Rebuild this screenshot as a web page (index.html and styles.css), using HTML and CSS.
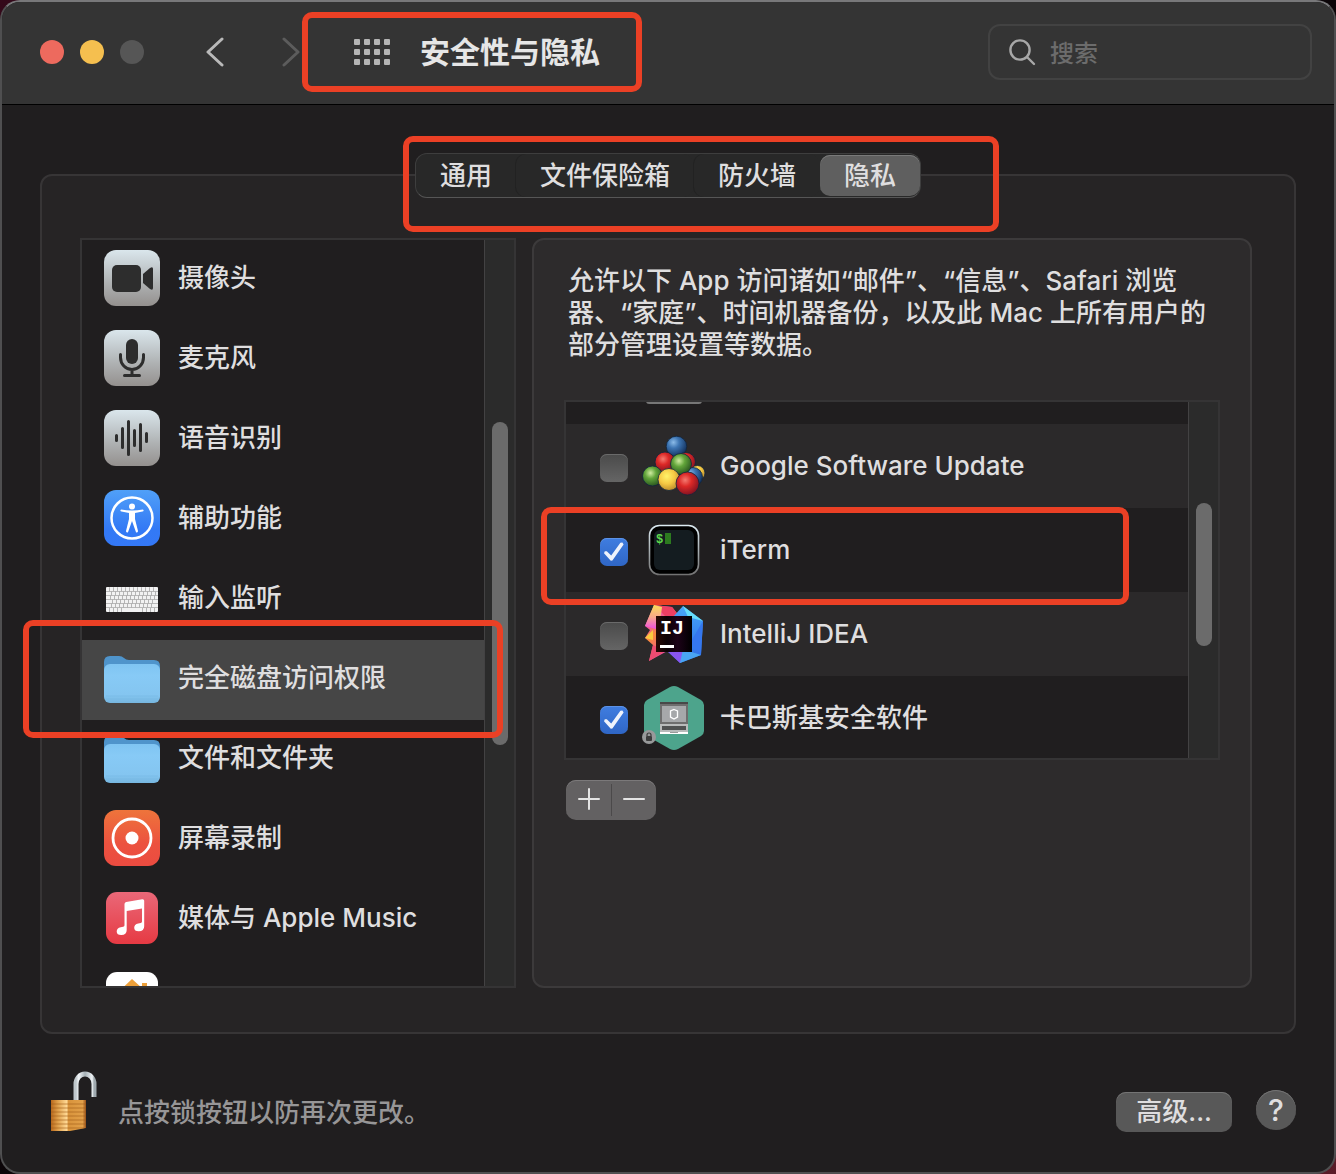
FILE: index.html
```html
<!DOCTYPE html>
<html lang="zh-CN">
<head>
    <meta charset="UTF-8">
    <meta name="viewport" content="width=device-width, initial-scale=1.0">
    <title>安全性与隐私</title>
    <link rel="stylesheet" href="styles.css">
</head>
<body>
    <div class="window">
        <header class="toolbar">
            <div class="lights">
                <button class="light red" aria-label="关闭"></button>
                <button class="light yellow" aria-label="最小化"></button>
                <button class="light" aria-label="缩放" disabled></button>
            </div>
            <nav class="nav">
                <button class="nav-button" aria-label="返回">
                    <svg width="20" height="30" viewBox="0 0 20 30" fill="none" stroke="#b9b9b9" stroke-width="3" stroke-linecap="round" stroke-linejoin="round"><path d="M17 2 3 15l14 13"/></svg>
                </button>
                <button class="nav-button" aria-label="前进" disabled>
                    <svg width="20" height="30" viewBox="0 0 20 30" fill="none" stroke="#5c5c5c" stroke-width="3" stroke-linecap="round" stroke-linejoin="round"><path d="M3 2l14 13L3 28"/></svg>
                </button>
            </nav>
            <div class="title-box">
                <button class="nav-button" aria-label="全部显示">
                    <svg width="36" height="26" viewBox="0 0 36 26" fill="#b5b5b5">
                        <rect x="0" y="0" width="6" height="6" rx="1"/><rect x="10" y="0" width="6" height="6" rx="1"/><rect x="20" y="0" width="6" height="6" rx="1"/><rect x="30" y="0" width="6" height="6" rx="1"/>
                        <rect x="0" y="10" width="6" height="6" rx="1"/><rect x="10" y="10" width="6" height="6" rx="1"/><rect x="20" y="10" width="6" height="6" rx="1"/><rect x="30" y="10" width="6" height="6" rx="1"/>
                        <rect x="0" y="20" width="6" height="6" rx="1"/><rect x="10" y="20" width="6" height="6" rx="1"/><rect x="20" y="20" width="6" height="6" rx="1"/><rect x="30" y="20" width="6" height="6" rx="1"/>
                    </svg>
                </button>
                <h1>安全性与隐私</h1>
            </div>
            <label class="search">
                <svg width="28" height="28" viewBox="0 0 28 28" fill="none" stroke="#a8a8a8" stroke-width="2.4" stroke-linecap="round"><circle cx="12" cy="12" r="9.6"/><path d="M19 19l7 7"/></svg>
                <input type="search" placeholder="搜索" aria-label="搜索">
            </label>
        </header>

        <main class="panel">
            <div class="tabs" role="tablist">
                <button class="tab" role="tab">通用</button>
                <button class="tab" role="tab">文件保险箱</button>
                <button class="tab" role="tab">防火墙</button>
                <button class="tab active" role="tab" aria-selected="true">隐私</button>
                <div class="mark mark-tabs"></div>
            </div>

            <div class="columns">
                <div class="scroll-box sidebar">
                    <ul class="categories">
                        <li><button class="category">
                            <svg class="icon" viewBox="0 0 56 56">
                                <defs><linearGradient id="silver" x1="0" y1="0" x2="0" y2="1"><stop offset="0" stop-color="#dae6ec"/><stop offset=".6" stop-color="#aeb1b2"/><stop offset="1" stop-color="#94908e"/></linearGradient></defs>
                                <rect width="56" height="56" rx="12" fill="url(#silver)"/>
                                <rect x="8" y="15" width="29" height="27" rx="5" fill="#2d2d2d"/>
                                <path d="M39 24l7-6q3-2 3 1v19q0 3-3 1l-7-6z" fill="#2d2d2d"/>
                            </svg>
                            摄像头</button></li>
                        <li><button class="category">
                            <svg class="icon" viewBox="0 0 56 56">
                                <rect width="56" height="56" rx="12" fill="url(#silver)"/>
                                <rect x="22" y="9" width="12" height="25" rx="6" fill="#2d2d2d"/>
                                <path d="M16.500 24.500v3a11.500 12 0 0 0 23 0v-3M28 40v5M20.500 45.500h15" fill="none" stroke="#2d2d2d" stroke-width="3" stroke-linecap="round"/>
                            </svg>
                            麦克风</button></li>
                        <li><button class="category">
                            <svg class="icon" viewBox="0 0 56 56">
                                <rect width="56" height="56" rx="12" fill="url(#silver)"/>
                                <path d="M12.500 25.500v5M18.500 18.500v19M24.500 11.500v33M30.500 20.500v15M36.500 14.500v26M42.500 23.500v8" stroke="#2d2d2d" stroke-width="3" stroke-linecap="round"/>
                            </svg>
                            语音识别</button></li>
                        <li><button class="category">
                            <svg class="icon" viewBox="0 0 56 56">
                                <defs><linearGradient id="blue" x1="0" y1="0" x2="0" y2="1"><stop offset="0" stop-color="#50a0f8"/><stop offset=".7" stop-color="#3379f5"/><stop offset="1" stop-color="#3478f6"/></linearGradient></defs>
                                <rect width="56" height="56" rx="12" fill="url(#blue)"/>
                                <circle cx="28" cy="28" r="20.500" fill="none" stroke="#fff" stroke-width="2.500"/>
                                <circle cx="28" cy="16.500" r="3" fill="#fff"/>
                                <path d="M17 19.500q-1.500 1.500.5 2l7.500 1.500v6l-3 12q0 2 2 1.200l4-11.200 4 11.200q2 .8 2-1.200l-3-12v-6l7.500-1.500q2-.5.5-2-11 2-22 0z" fill="#fff"/>
                            </svg>
                            辅助功能</button></li>
                        <li><button class="category">
                            <svg class="icon" viewBox="0 0 56 56">
                                <rect x="2" y="17" width="52" height="25" rx="1" fill="#f2f2f2"/>
                                <path d="M2 21.500h52M2 25.500h52M2 29.500h52M2 33.500h52M2 37.500h52" stroke="#aaa" stroke-width=".8"/>
                                <path d="M5 19.300h48M6 27.500h46M7 35.500h44" stroke="#a5a5a5" stroke-width="4" stroke-dasharray=".8 3.200"/>
                                <path d="M7 23.500h46M8 31.500h44M5 40h14M38 40h15" stroke="#a5a5a5" stroke-width="4" stroke-dasharray=".8 3.200"/>
                            </svg>
                            输入监听</button></li>
                        <li><button class="category selected">
                            <svg class="icon" viewBox="0 0 56 56">
                                <defs><linearGradient id="folder" x1="0" y1="0" x2="0" y2="1"><stop offset="0" stop-color="#7fc4f2"/><stop offset=".3" stop-color="#87caf6"/><stop offset=".8" stop-color="#84c5f0"/><stop offset="1" stop-color="#76b6df"/></linearGradient></defs>
                                <path d="M0 12q0-6 6-6h9q3 0 5 2 2 2 5 2h25q6 0 6 6v10H0z" fill="#4f94cb"/>
                                <rect y="14" width="56" height="39" rx="6" fill="url(#folder)"/>
                                <path d="M2 46h52M2 49h52" stroke="#76b9e4" stroke-width=".6"/>
                            </svg>
                            完全磁盘访问权限</button></li>
                        <li><button class="category">
                            <svg class="icon" viewBox="0 0 56 56">
                                <path d="M0 12q0-6 6-6h9q3 0 5 2 2 2 5 2h25q6 0 6 6v10H0z" fill="#4f94cb"/>
                                <rect y="14" width="56" height="39" rx="6" fill="url(#folder)"/>
                                <path d="M2 46h52M2 49h52" stroke="#76b9e4" stroke-width=".6"/>
                            </svg>
                            文件和文件夹</button></li>
                        <li><button class="category">
                            <svg class="icon" viewBox="0 0 56 56">
                                <defs><linearGradient id="orange" x1="0" y1="0" x2="0" y2="1"><stop offset="0" stop-color="#ee743b"/><stop offset=".6" stop-color="#ec523f"/><stop offset="1" stop-color="#eb4b40"/></linearGradient></defs>
                                <rect width="56" height="56" rx="12" fill="url(#orange)"/>
                                <circle cx="28" cy="28" r="19" fill="none" stroke="#fff" stroke-width="2.800"/>
                                <circle cx="28" cy="28" r="6.500" fill="#fff"/>
                            </svg>
                            屏幕录制</button></li>
                        <li><button class="category">
                            <svg class="icon" viewBox="0 0 56 56">
                                <defs><linearGradient id="pink" x1="0" y1="0" x2="0" y2="1"><stop offset="0" stop-color="#ea6878"/><stop offset="1" stop-color="#e63a43"/></linearGradient></defs>
                                <rect x="2" y="2" width="52" height="52" rx="11" fill="url(#pink)"/>
                                <path d="M20.500 14q0-1.600 1.700-2l16-2.700q2-.3 2 1.500v25.500q0 5-5.500 5-4.500 0-4.500-3.500 0-3.300 4-4.200l2.500-.5q1.300-.3 1.300-1.600V18.500L22.700 21v19q0 5-5.500 5-4.500 0-4.500-3.500 0-3.300 4-4.200l2.500-.5q1.300-.3 1.300-1.600z" fill="#fff"/>
                            </svg>
                            媒体与 Apple Music</button></li>
                        <li><button class="category" aria-label="HomeKit">
                            <svg class="icon" viewBox="0 0 56 56">
                                <rect x="2" y="2" width="52" height="52" rx="11" fill="#fff"/>
                                <path d="M8 28 28 9l10 9v-5h5v9l6 6v20H10V28z" fill="#eda03a"/>
                                <path d="M16 28l12-12 12 12v14H16z" fill="#f6c65f"/>
                            </svg>
                        </button></li>
                    </ul>
                    <div class="track"><div class="thumb thumb-sidebar"></div></div>
                    <div class="mark mark-category"></div>
                </div>

                <section class="detail">
                    <p class="description">允许以下 App 访问诸如“邮件”、“信息”、Safari 浏览<br>器、“家庭”、时间机器备份，以及此 Mac 上所有用户的<br>部分管理设置等数据。</p>
                    <div class="scroll-box app-box">
                        <ul class="apps">
                            <li class="app app-cut">
                                <svg class="app-icon" viewBox="0 0 64 64"><rect x="4" y="4" width="56" height="40" rx="3" fill="#777"/></svg>
                            </li>
                            <li><label class="app">
                                <input type="checkbox" class="check">
                                <svg class="app-icon" viewBox="0 0 64 64">
                                    <defs>
                                        <radialGradient id="ball-blue" cx=".35" cy=".3" r=".7"><stop offset="0" stop-color="#8bbbe8"/><stop offset=".4" stop-color="#3d75b3"/><stop offset="1" stop-color="#153461"/></radialGradient>
                                        <radialGradient id="ball-red" cx=".4" cy=".35" r=".7"><stop offset="0" stop-color="#f47a70"/><stop offset=".4" stop-color="#dd2927"/><stop offset="1" stop-color="#7a1020"/></radialGradient>
                                        <radialGradient id="ball-green" cx=".4" cy=".35" r=".7"><stop offset="0" stop-color="#d0eca0"/><stop offset=".4" stop-color="#62a53a"/><stop offset="1" stop-color="#254f1d"/></radialGradient>
                                        <radialGradient id="ball-yellow" cx=".4" cy=".35" r=".7"><stop offset="0" stop-color="#fff36a"/><stop offset=".5" stop-color="#f6c944"/><stop offset="1" stop-color="#b8872a"/></radialGradient>
                                    </defs>
                                    <g stroke="#10243c" stroke-width=".8">
                                        <circle cx="34.500" cy="12.500" r="10.300" fill="url(#ball-blue)"/>
                                        <circle cx="44" cy="28" r="9.500" fill="url(#ball-red)"/>
                                        <circle cx="23" cy="28" r="10" fill="url(#ball-red)"/>
                                        <circle cx="55.500" cy="39" r="7.500" fill="url(#ball-yellow)"/>
                                        <circle cx="51" cy="43" r="9.500" fill="url(#ball-blue)"/>
                                        <circle cx="10.500" cy="42" r="10" fill="url(#ball-green)"/>
                                        <circle cx="39" cy="30" r="10.500" fill="url(#ball-green)"/>
                                        <circle cx="27" cy="45.500" r="11" fill="url(#ball-yellow)"/>
                                        <circle cx="45.500" cy="49.500" r="11.500" fill="url(#ball-red)"/>
                                    </g>
                                </svg>
                                Google Software Update</label></li>
                            <li><label class="app">
                                <input type="checkbox" class="check" checked>
                                <svg class="app-icon" viewBox="0 0 64 64">
                                    <defs><linearGradient id="rim" x1="0" y1="0" x2="0" y2="1"><stop offset="0" stop-color="#dcebf2"/><stop offset="1" stop-color="#737373"/></linearGradient></defs>
                                    <rect x="7.500" y="7.500" width="49" height="49" rx="10" fill="#000" stroke="url(#rim)" stroke-width="1.600"/>
                                    <rect x="12" y="12" width="40" height="40" rx="6" fill="#141c20"/>
                                    <text class="prompt" x="14" y="25" fill="#5fd94d">$</text>
                                    <rect x="23" y="15" width="6" height="11" fill="#2c7a1f"/>
                                </svg>
                                iTerm</label></li>
                            <li><label class="app">
                                <input type="checkbox" class="check">
                                <svg class="app-icon" viewBox="0 0 64 64">
                                    <defs>
                                        <linearGradient id="ij-warm" x1="0" y1="0" x2=".6" y2="1"><stop offset="0" stop-color="#fcdf5a"/><stop offset=".3" stop-color="#ee4fb0"/><stop offset=".5" stop-color="#fb8a3c"/><stop offset="1" stop-color="#e63ac0"/></linearGradient>
                                        <linearGradient id="ij-cool" x1="0" y1="0" x2="0" y2="1"><stop offset="0" stop-color="#49a8f7"/><stop offset=".4" stop-color="#3b8df2"/><stop offset="1" stop-color="#2f6be6"/></linearGradient>
                                        <linearGradient id="ij-top" x1="0" y1="0" x2="0" y2="1"><stop offset="0" stop-color="#fbdc58"/><stop offset=".5" stop-color="#f9a88a"/><stop offset="1" stop-color="#ee4fe0"/></linearGradient>
                                        <linearGradient id="ij-black" x1="0" y1="0" x2="1" y2="0"><stop offset="0" stop-color="#2b0a05"/><stop offset=".3" stop-color="#0d0206"/><stop offset=".6" stop-color="#1c0318"/><stop offset="1" stop-color="#000"/></linearGradient>
                                    </defs>
                                    <path d="M12 3l18 2 8 10v30L29 47 7 59l4-16-8-7 5-8-5-4z" fill="url(#ij-warm)"/>
                                    <path d="M12 3l18 2 8 10H24z" fill="#ee3f63"/>
                                    <path d="M3 24 12 3l8 2-1 8-5 14z" fill="url(#ij-top)"/>
                                    <path d="M3 36l8-8v10z" fill="#fbc940"/>
                                    <path d="M7 59l4-16 12 6z" fill="#ee4b71"/>
                                    <path d="M41 4l20 15-2 34-21 8-15-14 8-32z" fill="url(#ij-cool)"/>
                                    <path d="M41 4l20 15-15-4z" fill="#65ddfa"/>
                                    <path d="M61 19l-13 22 11 11z" fill="#3577ef"/>
                                    <path d="M38 61l-4-16 25 8z" fill="#49a5f3"/>
                                    <path d="M23 47l15 14 3-14z" fill="#8a55ef"/>
                                    <rect x="14" y="14" width="36" height="36" fill="url(#ij-black)"/>
                                    <text class="ij" x="18" y="32" fill="#fff">IJ</text>
                                    <rect x="18" y="43" width="14" height="3" fill="#fff"/>
                                </svg>
                                IntelliJ IDEA</label></li>
                            <li><label class="app">
                                <input type="checkbox" class="check" checked>
                                <svg class="app-icon" viewBox="0 0 64 64">
                                    <path d="M28 1q4-2 8 0l23 13q3 2 3 5v26q0 3-3 5L36 63q-4 2-8 0L5 50q-3-2-3-5V19q0-3 3-5z" fill="#4da48c"/>
                                    <rect x="18" y="16" width="28" height="22" fill="#6e6e6e"/>
                                    <rect x="18" y="16" width="28" height="2" fill="#484848"/>
                                    <rect x="20" y="20" width="24" height="16" fill="#a6a8aa"/>
                                    <path d="M32 23.500l3.500 1.500v6L32 33l-3.500-2v-6z" fill="none" stroke="#fff" stroke-width="1.300"/>
                                    <rect x="18" y="38" width="28" height="8" fill="#b9bbbb"/>
                                    <rect x="20" y="40" width="24" height="4" fill="#505252"/>
                                    <rect x="18" y="46" width="28" height="2" fill="#fff"/>
                                    <rect x="28" y="46" width="8" height="1" fill="#999"/>
                                    <circle cx="7" cy="51" r="7" fill="#98999a"/>
                                    <rect x="4" y="50" width="6" height="5" rx="1" fill="#3b3b3b"/>
                                    <path d="M5 50v-1a2 2 0 0 1 4 0v1" fill="none" stroke="#3b3b3b" stroke-width="1.200"/>
                                </svg>
                                卡巴斯基安全软件</label></li>
                        </ul>
                        <div class="track"><div class="thumb thumb-apps"></div></div>
                        <div class="mark mark-app"></div>
                    </div>
                    <div class="add-remove">
                        <button aria-label="添加"><svg width="22" height="22" viewBox="0 0 22 22" stroke="#e4e4e4" stroke-width="2" stroke-linecap="round"><path d="M11 1v20M1 11h20"/></svg></button>
                        <button aria-label="移除"><svg width="22" height="22" viewBox="0 0 22 22" stroke="#e4e4e4" stroke-width="2" stroke-linecap="round"><path d="M1 11h20"/></svg></button>
                    </div>
                </section>
            </div>
        </main>

        <footer class="footer">
            <button class="lock" aria-label="锁定">
                <svg width="58" height="62" viewBox="0 0 58 62">
                    <defs>
                        <linearGradient id="steel" x1="0" y1="0" x2="1" y2="0"><stop offset="0" stop-color="#bfc7cb"/><stop offset=".15" stop-color="#f4f8fa"/><stop offset=".5" stop-color="#a5b0b5"/><stop offset=".9" stop-color="#eef3f5"/><stop offset="1" stop-color="#9fa9ae"/></linearGradient>
                        <linearGradient id="brass" x1="0" y1="0" x2="1" y2="0"><stop offset="0" stop-color="#b8691d"/><stop offset=".2" stop-color="#e0a14c"/><stop offset=".45" stop-color="#ffd894"/><stop offset=".5" stop-color="#d9943c"/><stop offset=".9" stop-color="#e2a049"/><stop offset="1" stop-color="#96511a"/></linearGradient>
                    </defs>
                    <path d="M36 30V14a9 10 0 0 1 18 0v13" fill="none" stroke="url(#steel)" stroke-width="5"/>
                    <path d="M11 30h35v28l-16 3H11z" fill="url(#brass)"/>
                    <path d="M11 34h35M11 38h35M11 42h35M11 46h35M11 50h35M11 54h35M11 58h33" stroke="#a05c18" stroke-width="1" opacity=".6"/>
                </svg>
            </button>
            <p class="hint">点按锁按钮以防再次更改。</p>
            <button class="advanced">高级...</button>
            <button class="help" aria-label="帮助">?</button>
        </footer>
    </div>
</body>
</html>
```

FILE: styles.css
```css
* {
    box-sizing: border-box;
}

body {
    margin: 0;
    font-family: Inter, "Noto Sans CJK SC", sans-serif;
    font-size: 26px;
    font-weight: 500;
    line-height: 32px;
    color: #dfdedf;
    background: linear-gradient(to bottom right, #34091a, #0b0508, #5a1c28);
}

button {
    margin: 0;
    padding: 0;
    border: none;
    background: none;
    color: inherit;
    font: inherit;
}

ul {
    margin: 0;
    padding: 0;
    list-style: none;
}

svg {
    display: block;
    flex-shrink: 0;
}

.window {
    display: flex;
    flex-direction: column;
    height: 100vh;
    min-height: 900px;
    border: 2px solid #4f4f50;
    border-top-color: #78787a;
    border-radius: 20px;
    background: #201e1f;
    overflow: hidden;
}

/* toolbar */
.toolbar {
    display: flex;
    align-items: center;
    flex-shrink: 0;
    height: 103px;
    padding: 0 22px 2px 38px;
    background: #343434;
    border-bottom: 1px solid #000;
}

.lights {
    display: flex;
    gap: 16px;
}

.light {
    width: 24px;
    height: 24px;
    border-radius: 50%;
    background: #565656;
}

.red {
    background: #ed6a5e;
}

.yellow {
    background: #f5bf4f;
}

.nav {
    display: flex;
    gap: 56px;
    margin-left: 61px;
}

.title-box {
    display: flex;
    align-items: center;
    gap: 30px;
    height: 80px;
    margin-left: 1px;
    padding: 0 36px 0 46px;
    border: 6px solid #eb4025;
    border-radius: 10px;
}

h1 {
    margin: 0;
    font-size: 30px;
    line-height: 40px;
    font-weight: 700;
    color: #e6e6e6;
    white-space: nowrap;
}

.search {
    display: flex;
    align-items: center;
    gap: 14px;
    width: 324px;
    height: 56px;
    margin-left: auto;
    padding: 0 18px;
    border: 2px solid #424242;
    border-radius: 12px;
}

.search input {
    flex: 1;
    min-width: 0;
    padding: 4px 0 0;
    border: none;
    outline: none;
    background: none;
    color: #dfdedf;
    font: inherit;
    font-size: 24px;
}

.search input::placeholder {
    color: #6c6c6c;
}

/* main panel */
.panel {
    display: flex;
    flex: 1;
    flex-direction: column;
    min-height: 0;
    margin: 69px 38px 0;
    border: 2px solid #373536;
    border-radius: 12px;
    background: #262425;
}

.tabs {
    position: relative;
    display: flex;
    align-self: center;
    height: 45px;
    margin-top: -23px;
    border: 1px solid #3e3e3e;
    border-bottom-color: #565656;
    border-radius: 12px;
    background: #282828;
}

.tab {
    padding: 0 24px;
    border-radius: 10px;
}

.tab + .tab {
    box-shadow: -1px 0 #222;
}

.tab.active {
    margin: 1px 0;
    background: #5f5f5f;
    box-shadow: inset 0 1px #7a7a7a;
}

.columns {
    display: grid;
    grid-template-columns: 436fr 720fr;
    gap: 16px;
    flex: 1;
    min-height: 0;
    padding: 40px 42px 44px 38px;
}

/* bordered list with its scroll bar */
.scroll-box {
    position: relative;
    display: flex;
    min-height: 0;
    border: 2px solid #353435;
    background: #201e1f;
}

.track {
    flex-shrink: 0;
    width: 30px;
    padding: 0 6px 0 7px;
    border-left: 1px solid #434243;
    background: #2b2b2b;
}

.thumb {
    border-radius: 8px;
    background: #6b6b6b;
}

.sidebar .track {
    display: grid;
    grid-template-rows: 182fr 323fr 241fr;
}

.app-box .track {
    display: grid;
    grid-template-rows: 101fr 143fr 112fr;
}

.thumb-sidebar,
.thumb-apps {
    grid-row: 2;
}

.categories,
.apps {
    flex: 1;
    min-width: 0;
    overflow: hidden;
}

.category {
    display: flex;
    align-items: center;
    gap: 18px;
    width: 100%;
    height: 80px;
    padding: 0 0 4px 22px;
    text-align: left;
    white-space: nowrap;
}

.category.selected {
    background: #464646;
}

.icon {
    width: 56px;
    height: 56px;
}

/* right side */
.detail {
    min-width: 0;
    padding: 25px 30px;
    border: 2px solid #3c3a3b;
    border-radius: 12px;
    background: #2d2b2c;
}

.description {
    margin: 0 0 39px;
    padding-left: 4px;
    white-space: nowrap;
}

.app-box {
    height: 360px;
}

.app {
    display: flex;
    align-items: center;
    gap: 14px;
    height: 84px;
    padding-left: 34px;
}

.apps li:nth-child(even) {
    background: #2b292a;
}

/* the list is scrolled down, only the end of this row shows */
.app-cut {
    align-items: flex-start;
    height: 22px;
    padding-left: 76px;
}

.app-cut .app-icon {
    margin-top: -42px;
}

.app-icon {
    width: 64px;
    height: 64px;
}

.prompt {
    font: bold 12px "Liberation Mono", monospace;
}

.ij {
    font: bold 20px "Liberation Mono", monospace;
}

.check {
    display: grid;
    place-content: center;
    appearance: none;
    width: 28px;
    height: 28px;
    margin: 4px 0 0;
    border-radius: 7px;
    background: linear-gradient(#4a4a4a, #656565);
    box-shadow: inset 0 1px #6a6a6a;
}

.check:checked {
    background: linear-gradient(#3f7de0, #2f66c5);
    box-shadow: inset 0 1px #5c92e6;
}

.check:checked::before {
    content: "";
    width: 20px;
    height: 20px;
    background: #eef3fc;
    clip-path: polygon(0 56%, 4% 46%, 14% 46%, 36% 68%, 82% 4%, 92% 2%, 98% 12%, 42% 92%, 34% 94%);
}

.add-remove {
    display: inline-flex;
    margin: 20px 0 0 2px;
    padding: 4px 0;
    border-radius: 10px;
    background: #636162;
    box-shadow: inset 0 1px #7b797a;
}

.add-remove button {
    display: grid;
    place-content: center;
    width: 45px;
    height: 32px;
    padding-bottom: 2px;
}

.add-remove button + button {
    border-left: 1px solid #4b494a;
}

/* red frames */
.mark {
    position: absolute;
    border: 6px solid #eb4025;
    border-radius: 10px;
    pointer-events: none;
}

.mark-tabs {
    top: -18px;
    right: -79px;
    bottom: -35px;
    left: -13px;
}

.mark-category {
    top: 380px;
    right: 11px;
    left: -59px;
    height: 118px;
}

.mark-app {
    top: 105px;
    right: 89px;
    left: -25px;
    height: 98px;
}

/* footer */
.footer {
    display: flex;
    align-items: flex-end;
    flex-shrink: 0;
    padding: 36px 38px 40px;
}

.hint {
    flex: 1;
    margin: 0 0 0 20px;
    line-height: 38px;
    color: #979697;
}

.advanced {
    height: 40px;
    padding: 0 20px;
    border-radius: 10px;
    background: #585858;
    box-shadow: inset 0 1px #747474;
}

.help {
    width: 40px;
    height: 40px;
    margin: 0 0 2px 24px;
    border-radius: 50%;
    background: #585858;
    box-shadow: inset 0 1px #747474;
    font-size: 30px;
}
```
